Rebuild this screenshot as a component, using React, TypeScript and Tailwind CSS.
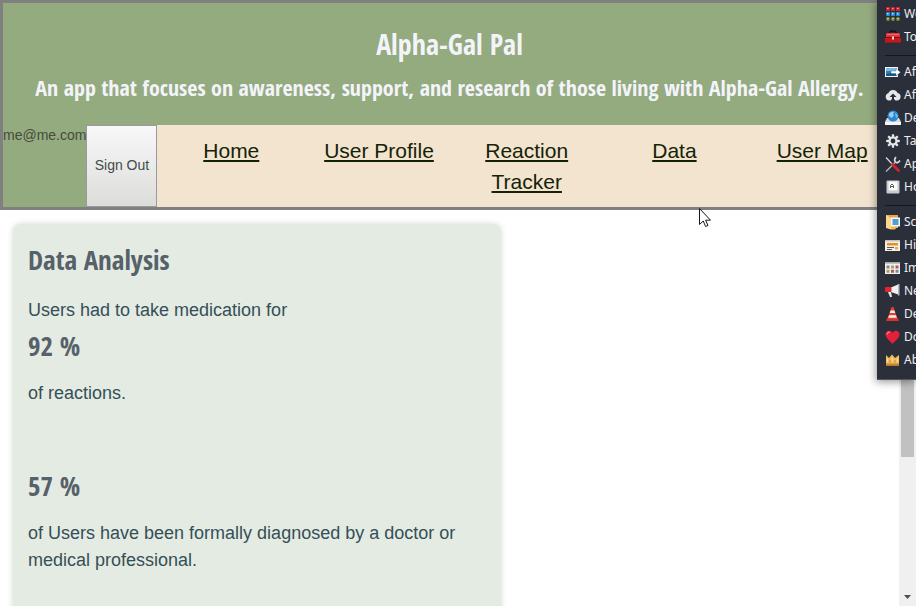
import type { ReactNode } from "react";

const navLinks = ["Home", "User Profile", "Reaction Tracker", "Data", "User Map"];

function Icon({ children }: { children: ReactNode }) {
  return (
    <svg viewBox="0 0 16 16" className="size-4 shrink-0" aria-hidden="true">
      {children}
    </svg>
  );
}

const WorkflowsIcon = () => (
  <Icon>
    {[1, 6, 11].map((x) => (
      <g key={x}>
        <rect x={x} y="1" width="4" height="4" rx=".5" fill="#d3222b" />
        <rect x={x + 1} y="2" width="1.5" height="1" fill="#ff9c9c" />
        <rect x={x} y="6" width="4" height="4" rx=".5" fill="#2484cf" />
        <rect x={x + 1} y="7" width="1.5" height="1.5" fill="#9ddcff" />
        <circle cx={x + 2} cy="13" r="1.9" fill="#7d9138" />
        <rect x={x + 1} y="12" width="1.5" height="1" fill="#c6d27c" />
      </g>
    ))}
  </Icon>
);

const ToolboxIcon = () => (
  <Icon>
    <path d="M5 5V3.500Q5 2 6.500 2h3Q11 2 11 3.500V5" fill="none" stroke="#111318" strokeWidth="1.4" />
    <rect x="1" y="4" width="14" height="4.500" rx="1" fill="#e2333b" />
    <rect x="0" y="8" width="16" height="5.500" rx=".6" fill="#c8161f" />
    <path d="M0 8.500h16" stroke="#7e0c12" />
    <path d="M2 5.500h12" stroke="#f4777b" strokeWidth=".8" />
    <rect x="7" y="7.500" width="2" height="3" fill="#f1d9cb" />
  </Icon>
);

const AfterCaptureIcon = () => (
  <Icon>
    <rect x="0" y="3" width="13" height="10" fill="#f3f6f8" />
    <rect x="1" y="4" width="11" height="8" fill="#2d7fc0" />
    <path d="M1 4h11v3H1z" fill="#78bdea" />
    <path d="M1 10l5-1 6 1v2H1z" fill="#1d5578" />
    <path d="M6 7h5V4.500L15.500 8.200 11 12V9.500H6z" fill="#fff" stroke="#315b78" strokeWidth=".4" />
  </Icon>
);

const CloudIcon = () => (
  <Icon>
    <path d="M4 13.500a3.700 3.700 0 0 1-.7-7.200A5 5 0 0 1 12.600 6 3.800 3.800 0 0 1 12 13.500h-1.500L8 11l-2.500 2.500z" fill="#e5e7eb" />
    <path d="M8 6.500L4.500 10H7v3h2v-3h2.500z" fill="#2b2f3a" />
  </Icon>
);

const DestinationsIcon = () => (
  <Icon>
    <path d="M2 8h12l2 4v3H0v-3z" fill="#d8dde2" />
    <path d="M0 12h16v3H0z" fill="#f4f5f6" />
    <circle cx="8" cy="6" r="5.500" fill="#2f86cf" />
    <path d="M4 4q2-3 5-2l-1 2 1 1-2 3-3-2z" fill="#8fd0f4" />
    <path d="M10 3q3 1 3 4l-2 1z" fill="#6bb8e8" />
  </Icon>
);

const GearIcon = () => (
  <Icon>
    <circle cx="8" cy="8" r="3.400" fill="none" stroke="#e6e7e9" strokeWidth="2" />
    {[0, 45, 90, 135, 180, 225, 270, 315].map((a) => (
      <path key={a} d="M7 1.200h2l.4 3H6.600z" fill="#e6e7e9" transform={`rotate(${a} 8 8)`} />
    ))}
  </Icon>
);

const ToolsIcon = () => (
  <Icon>
    <path d="M1 15.500L10 6.500" stroke="#aeb3b9" strokeWidth="1.500" />
    <path d="M11 1Q8.500 4 10.500 6t4.500-1.500" fill="none" stroke="#d9dcdf" strokeWidth="1.700" />
    <path d="M1 1.500l6.500 7" stroke="#dadde0" strokeWidth="1.200" />
    <path d="M7.500 8.500l6 6" stroke="#d92128" strokeWidth="2.800" strokeLinecap="round" />
  </Icon>
);

const KeyIcon = () => (
  <Icon>
    <rect x="1.500" y="1.500" width="13" height="13" rx="1" fill="#c9cbcc" />
    <rect x="3.500" y="2.500" width="9" height="9" rx="1" fill="#f8f8f7" />
    <path d="M5.500 9V6.500L7 5l1.500 1.500V9M5.500 7.500h3" fill="none" stroke="#55585b" />
  </Icon>
);

const FolderIcon = () => (
  <Icon>
    <path d="M1 1h12v13H1z" fill="#e7a845" />
    <rect x="6" y="3.500" width="9" height="9" fill="#f6f7f8" />
    <rect x="7.500" y="5" width="6" height="6" fill="#4f9fd6" />
    <path d="M1 1l5 3v11.500L1 14z" fill="#fbd78b" />
    <path d="M6 13h6l-2 2.500H6z" fill="#efb858" />
  </Icon>
);

const HistoryIcon = () => (
  <Icon>
    <rect x="0" y="3" width="15" height="11" fill="#f4f0e8" />
    <rect x="0" y="3" width="15" height="1.500" fill="#c3c0ba" />
    <rect x="2" y="6" width="11" height="2.500" fill="#e5902a" />
    <path d="M2 10.500h7M2 12.500h5" stroke="#5c5a56" />
    <rect x="10" y="10" width="3" height="2.500" fill="#eba85a" />
  </Icon>
);

const ImageHistoryIcon = () => (
  <Icon>
    <rect x="0" y="2.500" width="15" height="11.500" fill="#eef0f0" />
    <rect x="0" y="2.500" width="15" height="1.500" fill="#bfc2c4" />
    <path d="M1.500 5.500h3v3h-3zM10.500 9.800h3v3h-3z" fill="#6f8f9f" />
    <path d="M6 5.500h3v3H6zM1.500 9.800h3v3h-3z" fill="#b3a05b" />
    <path d="M10.500 5.500h3v3h-3zM6 9.800h3v3H6z" fill="#b0585c" />
  </Icon>
);

const NewsIcon = () => (
  <Icon>
    <path d="M6 4.500l7-3v10l-7-2.500z" fill="#eff0f1" />
    <rect x="13" y="1" width="1.500" height="11.500" fill="#b5b9bd" />
    <rect x="0" y="4" width="6.500" height="5" rx="1" fill="#e0252c" />
    <path d="M3 9h3l1 5H5z" fill="#e3e4e5" />
  </Icon>
);

const ConeIcon = () => (
  <Icon>
    <path d="M2 12h11l1 3H1z" fill="#d9322b" />
    <path d="M6.500 1h2l4 12h-10z" fill="#e6402f" />
    <path d="M5.600 4.500h3.800l.8 2.500H4.800zM4 9.300h7l.8 2.400H3.200z" fill="#f5efec" />
  </Icon>
);

const HeartIcon = () => (
  <Icon>
    <path d="M7.500 15C5 12 .5 9 .5 5.500.5 1.500 6 .5 7.500 4c2-3.500 7-2.500 7 1.500 0 3.500-4.500 6.500-7 9.500z" fill="#e5203a" />
    <path d="M2 5.500Q2.500 3 5 3" fill="none" stroke="#f88593" strokeWidth="1.200" />
  </Icon>
);

const CrownIcon = () => (
  <Icon>
    <path d="M1 13.500V3l3 3 3-3.500L10 6l4-3v10.500z" fill="#f0bd62" />
    <path d="M1 11.500h13v2H1z" fill="#c98422" />
    <path d="M2.500 7v3M7.500 6v3M12.500 7v3" stroke="#fce3a0" />
    <path d="M5 8v3M10 8v3" stroke="#c98a34" />
  </Icon>
);

const menuGroups = [
  [
    { icon: WorkflowsIcon, label: "Wo" },
    { icon: ToolboxIcon, label: "To" },
  ],
  [
    { icon: AfterCaptureIcon, label: "Af" },
    { icon: CloudIcon, label: "Af" },
    { icon: DestinationsIcon, label: "De" },
    { icon: GearIcon, label: "Ta" },
    { icon: ToolsIcon, label: "Ap" },
    { icon: KeyIcon, label: "Ho" },
  ],
  [
    { icon: FolderIcon, label: "Sc" },
    { icon: HistoryIcon, label: "Hi" },
    { icon: ImageHistoryIcon, label: "Im" },
    { icon: NewsIcon, label: "Ne" },
    { icon: ConeIcon, label: "De" },
    { icon: HeartIcon, label: "Do" },
    { icon: CrownIcon, label: "Ab" },
  ],
];

function Header() {
  return (
    <header className="shrink-0 border-[3px] border-[#808080] bg-[#94aa7f]">
      <div className="flex flex-col items-center gap-1 pt-5 pb-5 text-center font-['Open_Sans_Condensed','Liberation_Sans_Narrow','Open_Sans',sans-serif] font-bold text-[#f3f4fa]">
        <h1 className="text-[28px] leading-[42px]">Alpha-Gal Pal</h1>
        <h2 className="text-[22px] leading-9">
          An app that focuses on awareness, support, and research of those living with Alpha-Gal Allergy.
        </h2>
      </div>
      <div className="flex text-sm text-[#444c40]">
        <span>me@me.com</span>
        <button className="w-[71px] shrink-0 border border-[#979b9f] bg-linear-to-b from-[#f8f8f8] to-[#dcdddb] pb-[2px] text-[#444c49]">
          Sign Out
        </button>
        <nav className="grid grow grid-cols-5 bg-[#f2e4cf] py-[10px] text-center text-[21px] leading-[31px]">
          {navLinks.map((label) => (
            <div key={label} className="px-4">
              <a href="#" className="text-[#142308] underline decoration-2 underline-offset-2">
                {label}
              </a>
            </div>
          ))}
        </nav>
      </div>
    </header>
  );
}

function CardHeading({ children }: { children: ReactNode }) {
  return (
    <h2 className="font-['Open_Sans_Condensed','Liberation_Sans_Narrow',sans-serif] text-[27px] leading-10 font-bold text-[#56616a]">
      {children}
    </h2>
  );
}

function DataCard() {
  return (
    <section className="w-full max-w-[488px] rounded-lg bg-[#e4ebe3] px-[15px] pt-4 pb-16 text-lg leading-[27px] text-[#354f57] shadow-[0_0_6px_rgba(0,0,0,0.16)]">
      <CardHeading>Data Analysis</CardHeading>
      <p className="mt-[17px]">Users had to take medication for</p>
      <div className="mt-[2px]">
        <CardHeading>92 %</CardHeading>
      </div>
      <p className="mt-[14px]">of reactions.</p>
      <div className="mt-[59px]">
        <CardHeading>57 %</CardHeading>
      </div>
      <p className="mt-[14px]">of Users have been formally diagnosed by a doctor or medical professional.</p>
    </section>
  );
}

function Scrollbar() {
  return (
    <div className="flex w-[17px] shrink-0 flex-col bg-[#f0f0f0] px-[2px]">
      <div className="h-[457px] bg-[#c1c1c1]" />
      <svg viewBox="0 0 13 17" className="mt-auto h-[17px] w-[13px]" aria-hidden="true">
        <path d="M3 6h7L6.500 10z" fill="#505050" />
      </svg>
    </div>
  );
}

function ContextMenu() {
  return (
    <aside className="absolute top-0 right-0 w-[39px] border-b border-[#51555e] bg-[#2b2f3a] pt-[2px] pb-2 pl-2 font-['Noto_Sans',sans-serif] text-xs text-[#eceef0] shadow-[-1px_2px_8px_rgba(0,0,0,0.4)]">
      {menuGroups.map((items, i) => (
        <ul key={i} className={i > 0 ? "mt-[7px] border-t border-[#14171c] pt-1" : ""}>
          {items.map(({ icon: Glyph, label }, j) => (
            <li key={j}>
              <button className="flex h-[23px] w-full items-center gap-[3px] overflow-hidden">
                <Glyph />
                <span>{label}</span>
              </button>
            </li>
          ))}
        </ul>
      ))}
    </aside>
  );
}

export default function App() {
  return (
    <div className="relative flex h-screen overflow-hidden bg-white font-['Liberation_Sans',sans-serif]">
      <div className="flex min-w-0 grow flex-col overflow-hidden">
        <Header />
        <main className="flex shrink-0 pt-[14px] pl-[13px]">
          <DataCard />
        </main>
      </div>
      <Scrollbar />
      <ContextMenu />
      <svg viewBox="0 0 12 20" className="absolute top-[208px] left-[699px] h-5 w-3" aria-hidden="true">
        <path d="M.5.5v16l3.700-3.500 2.400 5.500 2.400-1-2.400-5.300h4.900z" fill="#fff" stroke="#111820" />
      </svg>
    </div>
  );
}
